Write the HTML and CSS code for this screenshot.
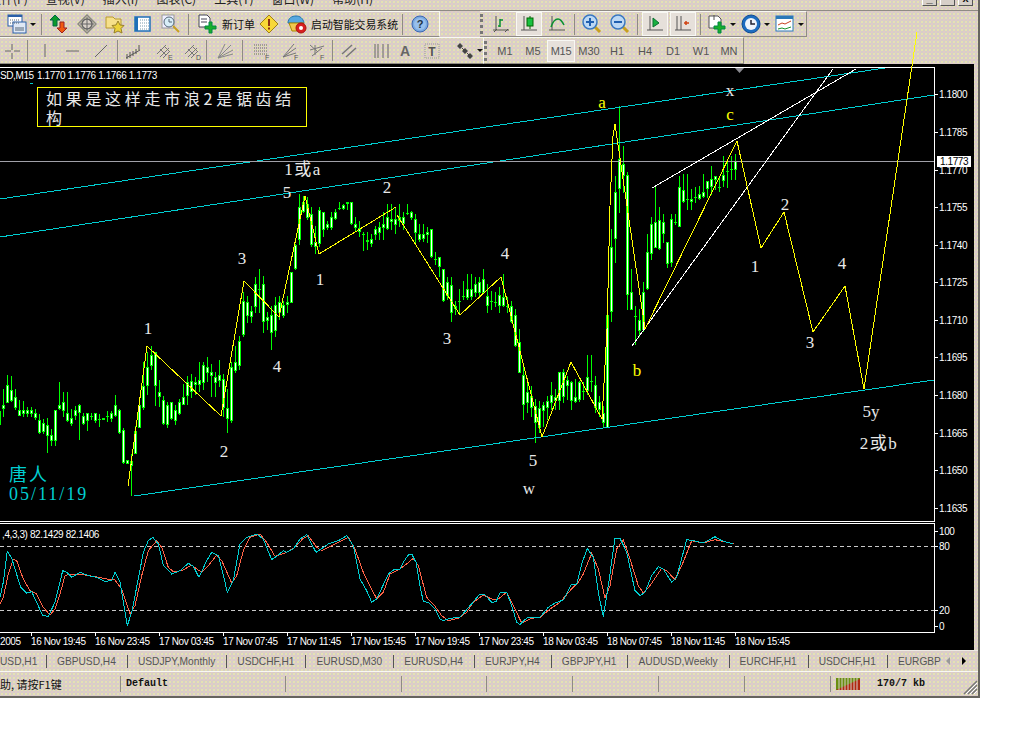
FILE: index.html
```html
<!DOCTYPE html>
<html lang="en">
<head>
  <meta charset="UTF-8">
  <meta name="viewport" content="width=device-width, initial-scale=1.0">
  <title>MetaTrader</title>
  <link rel="stylesheet" href="styles.css">
</head>
<body>
  <div class="window">
    <!-- 菜单栏，上半截被截掉了 -->
    <div class="menu">
      <span class="menu_first">文件(F)</span>
      <span>查视(V)</span>
      <span>插入(I)</span>
      <span>图表(C)</span>
      <span>工具(T)</span>
      <span>窗口(W)</span>
      <span>帮助(H)</span>
      <div class="win_btns">
        <div class="win_btn">_</div>
        <div class="win_btn">▫</div>
        <div class="win_btn">x</div>
      </div>
    </div>

    <div class="tool_row row_top">
      <div class="tool_group group_main">
        <div class="tb tb_caret">
          <svg width="20" height="20" viewBox="0 0 20 20"><rect x="1" y="1" width="14" height="11" fill="#fff" stroke="#2a5fa8"/><rect x="1" y="1" width="14" height="2" fill="#2a5fa8"/><rect x="6" y="8" width="13" height="11" fill="#dfe8f5" stroke="#2a5fa8"/><path d="M3 6h9M3 9h9" stroke="#567" stroke-dasharray="1 1"/><path d="M8 14h9M8 16h9" stroke="#567"/></svg>
          <i class="caret"></i>
        </div>
        <div class="sep"></div>
        <div class="tb"><svg width="20" height="20" viewBox="0 0 20 20"><path d="M6 1l5 5H8v6H4V6H1z" fill="#0a9a2a" stroke="#064"/><path d="M11 8h4v6h3l-5 5-5-5h3z" fill="#f05a10" stroke="#922"/></svg></div>
        <div class="tb"><svg width="20" height="20" viewBox="0 0 20 20"><path d="M10 1l9 9-9 9-9-9z" fill="none" stroke="#8a8a80" stroke-width="1.5"/><circle cx="10" cy="10" r="5" fill="#d8d0c8" stroke="#666" stroke-width="1.5"/><path d="M10 3v14M3 10h14" stroke="#666"/></svg></div>
        <div class="tb"><svg width="20" height="20" viewBox="0 0 20 20"><path d="M1 3h7l2 2h6v9H1z" fill="#f6e08a" stroke="#b89a30"/><path d="M13 7l2 4 4 .5-3 3 1 4.500-4-2-4 2 1-4.500-3-3 4-.5z" fill="#ecd23a" stroke="#97802a"/></svg></div>
        <div class="tb"><svg width="18" height="18" viewBox="0 0 18 18"><rect x="1" y="2" width="15" height="14" fill="#fff" stroke="#1f70b8" stroke-width="1.500"/><rect x="1" y="2" width="3" height="14" fill="#1f70b8"/><path d="M6 5h9M6 8h9M6 11h9M6 14h9" stroke="#79a" stroke-dasharray="1 1"/></svg></div>
        <div class="tb"><svg width="20" height="20" viewBox="0 0 20 20"><rect x="1" y="1" width="12" height="13" fill="#eef" stroke="#999"/><circle cx="8" cy="8" r="5" fill="#d8eef8" stroke="#567"/><path d="M8 5v3h3" stroke="#567" fill="none"/><path d="M12 12l6 6" stroke="#c8a020" stroke-width="2"/></svg></div>
        <div class="sep sep_b"></div>
        <div class="tb_text">
          <svg width="20" height="20" viewBox="0 0 20 20"><path d="M1 1h8l3 3v9H1z" fill="#fff" stroke="#445"/><path d="M3 5h6M3 8h6" stroke="#445"/><path d="M11 8h3v4h4v3h-4v4h-3v-4H7v-3h4z" fill="#18b02a" stroke="#084"/></svg>
          <span>新订单</span>
        </div>
        <div class="tb"><svg width="20" height="20" viewBox="0 0 20 20"><path d="M10 1l9 9-9 9-9-9z" fill="#f8d838" stroke="#a08018"/><path d="M10 5v7M10 13.500v2" stroke="#903010" stroke-width="2"/></svg></div>
        <div class="tb_text tb_robot">
          <svg width="20" height="20" viewBox="0 0 20 20"><path d="M1 9c0-5 4-7 8-7s7 2 8 7z" fill="#58a8e0" stroke="#27a"/><path d="M2 9h15l-2 8H5z" fill="#f0c850" stroke="#a80"/><circle cx="14" cy="14" r="5" fill="#d82020" stroke="#a11"/><circle cx="14" cy="14" r="2" fill="#fff"/></svg>
          <span>启动智能交易系统</span>
        </div>
        <div class="sep"></div>
        <div class="tb"><svg width="18" height="18" viewBox="0 0 18 18"><circle cx="9" cy="9" r="8" fill="#7aa8e0" stroke="#3a68b0"/><circle cx="9" cy="9" r="6" fill="#98c0ec"/><text x="9" y="13" class="icon_help">?</text></svg></div>
      </div>
      <div class="tool_gap"></div>
      <div class="tool_group group_charts">
        <div class="gripper"></div>
        <div class="tb"><svg width="18" height="18" viewBox="0 0 18 18"><path d="M4 1v14M1 15h16M2 17l3-3M13 17l3-3" stroke="#555" fill="none"/><path d="M8 12V4M8 5h3M8 11H6" stroke="#0a9030" stroke-width="1.500" fill="none"/></svg></div>
        <div class="tb tb_on"><svg width="18" height="18" viewBox="0 0 18 18"><path d="M4 1v14M1 15h16" stroke="#555" fill="none"/><path d="M10 1v13" stroke="#060"/><rect x="7" y="3" width="6" height="8" fill="#18c040" stroke="#060"/></svg></div>
        <div class="tb"><svg width="18" height="18" viewBox="0 0 18 18"><path d="M4 1v14M1 15h16" stroke="#555" fill="none"/><path d="M3 12c2-6 5-8 7-8s4 2 6 6" stroke="#0a9030" stroke-width="1.500" fill="none"/></svg></div>
        <div class="sep"></div>
        <div class="tb"><svg width="20" height="20" viewBox="0 0 20 20"><path d="M12 12l6 6" stroke="#c8a020" stroke-width="3"/><circle cx="8" cy="8" r="7" fill="#bcd8f4" stroke="#3a78c0" stroke-width="1.500"/><path d="M4 8h8M8 4v8" stroke="#2060b0" stroke-width="2"/></svg></div>
        <div class="tb"><svg width="20" height="20" viewBox="0 0 20 20"><path d="M12 12l6 6" stroke="#c8a020" stroke-width="3"/><circle cx="8" cy="8" r="7" fill="#bcd8f4" stroke="#3a78c0" stroke-width="1.500"/><path d="M4 8h8" stroke="#2060b0" stroke-width="2"/></svg></div>
        <div class="sep"></div>
        <div class="tb tb_on"><svg width="18" height="18" viewBox="0 0 18 18"><path d="M4 1v14M1 15h16" stroke="#555" fill="none"/><path d="M7 3v9l6-4z" fill="#18b040" stroke="#0a7030"/></svg></div>
        <div class="tb tb_on"><svg width="18" height="18" viewBox="0 0 18 18"><path d="M3 1v14M7 1v14M1 15h16" stroke="#555" fill="none"/><path d="M10 8h5M12 6v4" stroke="#d04010" stroke-width="1.500"/></svg></div>
        <div class="sep"></div>
        <div class="tb tb_caret"><svg width="20" height="20" viewBox="0 0 20 20"><path d="M2 2h9l3 3v9H2z" fill="#fff" stroke="#555"/><path d="M7 1v5" stroke="#555"/><path d="M11 8h3v4h4v3h-4v4h-3v-4H7v-3h4z" fill="#18b02a" stroke="#084"/></svg><i class="caret"></i></div>
        <div class="tb tb_caret"><svg width="20" height="20" viewBox="0 0 20 20"><circle cx="10" cy="10" r="9" fill="#1c6cc0" stroke="#0e4a90"/><circle cx="10" cy="10" r="6" fill="#eef4fb"/><path d="M10 6v4h4" stroke="#223" stroke-width="1.500" fill="none"/></svg><i class="caret"></i></div>
        <div class="tb tb_caret"><svg width="20" height="18" viewBox="0 0 20 18"><rect x="1" y="1" width="17" height="15" fill="#fff" stroke="#2a78b8"/><rect x="1" y="1" width="17" height="3" fill="#2a78b8"/><path d="M3 10l4-2 3 1 6-3" stroke="#c84020" fill="none"/><path d="M3 14l4-1 3 1 6-2" stroke="#18902a" fill="none"/></svg><i class="caret"></i></div>
      </div>
    </div>

    <div class="tool_row row_bottom">
      <div class="tool_group group_draw">
        <div class="tb w24"><svg width="18" height="18" viewBox="0 0 18 18"><path d="M9 2v6M9 11v6M2 9h6M11 9h6" stroke="#666"/></svg></div>
        <div class="sep"></div>
        <div class="tb"><svg width="18" height="18" viewBox="0 0 18 18"><path d="M9 2v13" stroke="#666"/></svg></div>
        <div class="tb"><svg width="18" height="18" viewBox="0 0 18 18"><path d="M2 9h13" stroke="#666"/></svg></div>
        <div class="tb"><svg width="18" height="18" viewBox="0 0 18 18"><path d="M3 15L15 3" stroke="#666"/></svg></div>
        <div class="sep sep_tight"></div>
        <div class="tb"><svg width="18" height="18" viewBox="0 0 18 18"><path d="M2 16l14-8M3 12v5M6 10v6M9 9v5M12 7v5M15 3v5" stroke="#555" fill="none"/></svg></div>
        <div class="tb w36"><svg width="18" height="18" viewBox="0 0 18 18"><path d="M1 12L10 3M4 15l9-9M7 16l7-7M4 7l6 6M8 4l6 6" stroke="#777" fill="none"/><text x="12" y="18" class="icon_tiny">E</text></svg></div>
        <div class="tb w20"><svg width="18" height="18" viewBox="0 0 18 18"><path d="M1 12L10 3M4 15l9-9M7 16l7-7M4 7l6 6M8 4l6 6" stroke="#777" fill="none"/><text x="12" y="18" class="icon_tiny">D</text></svg></div>
        <div class="sep sep_b"></div>
        <div class="tb"><svg width="18" height="18" viewBox="0 0 18 18"><path d="M2 16L15 3M2 16l15-8M2 16l15-4M2 16L9 2" stroke="#888" fill="none"/></svg></div>
        <div class="sep"></div>
        <div class="tb w32"><svg width="20" height="18" viewBox="0 0 20 18"><path d="M2 3h14M2 6h14M2 9h14M2 12h14" stroke="#666" stroke-dasharray="1 1"/><text x="13" y="18" class="icon_tiny">F</text></svg></div>
        <div class="tb w26"><svg width="20" height="18" viewBox="0 0 20 18"><path d="M2 15L13 2M2 15L15 6M2 15l13-4" stroke="#777" fill="none"/><text x="13" y="18" class="icon_tiny">F</text></svg></div>
        <div class="tb w26"><svg width="20" height="18" viewBox="0 0 20 18"><path d="M3 3l8 7M3 8l14-4M5 14L15 6M8 3v10" stroke="#777" fill="none"/><text x="13" y="18" class="icon_tiny">F</text></svg></div>
        <div class="sep sep_tight"></div>
        <div class="tb w30"><svg width="18" height="18" viewBox="0 0 18 18"><path d="M2 12L12 3M6 15L16 6" stroke="#777" stroke-width="1.500" fill="none"/></svg></div>
        <div class="tb w36"><svg width="18" height="18" viewBox="0 0 18 18"><path d="M2 2v14M5 2v14M10 2v14M15 2v14" stroke="#666" fill="none"/></svg></div>
        <div class="tb w10 tb_glyph">A</div>
        <div class="tb w44"><svg width="18" height="18" viewBox="0 0 18 18"><rect x="2" y="2" width="14" height="14" fill="none" stroke="#999" stroke-dasharray="1 1"/><text x="9" y="14" class="icon_t">T</text></svg></div>
        <div class="tb tb_caret tb_arrows"><svg width="18" height="18" viewBox="0 0 18 18"><path d="M4 1l3 3-3 3-3-3zM9 6l3 3-3 3-3-3zM14 11l3 3-3 3-3-3z" fill="#444"/><path d="M6 6l2 2M11 11l2 2" stroke="#444"/></svg><i class="caret"></i></div>
      </div>
      <div class="tool_group group_periods">
        <div class="gripper"></div>
        <div class="period">M1</div>
        <div class="period">M5</div>
        <div class="period period_on">M15</div>
        <div class="period">M30</div>
        <div class="period">H1</div>
        <div class="period">H4</div>
        <div class="period">D1</div>
        <div class="period">W1</div>
        <div class="period">MN</div>
      </div>
    </div>

    <div class="chart">
      <svg class="chart_svg" width="974" height="586" viewBox="0 65 974 586">
        <g id="frame"></g>
        <g id="candles"></g>

        <!-- 通道线 -->
        <g class="ln_cyan">
          <line x1="0" y1="200" x2="885" y2="69"/>
          <line x1="0" y1="238" x2="934" y2="96"/>
          <line x1="134" y1="497" x2="934" y2="381"/>
        </g>
        <line class="ln_price" x1="0" y1="162" x2="934" y2="162"/>
        <g class="ln_white">
          <line x1="652" y1="189" x2="856" y2="70"/>
          <line x1="632" y1="347" x2="833" y2="70"/>
        </g>
        <!-- 波浪 -->
        <polyline class="ln_yellow" points="128,487 147,347 221,417 244,282 279,318 305,197 319,255 396,208"/>
        <polyline class="ln_yellow" points="397,216 460,316 501,278 542,438 571,363 602,420 607,330 610,207 613,137 615,125 627,207 645,330 737,142 761,249 784,213 813,333 845,287 864,390 917,33"/>

        <text x="0" y="80" class="axis">SD,M15</text>
        <text x="37" y="80" class="axis">1.1770 1.1776 1.1766 1.1773</text>
        <rect x="30" y="84" width="3" height="1" fill="#00ced1"/>
        <path d="M735 69h9l-4.500 5z" fill="#8a8a90"/>

        <rect class="note_box" x="37.500" y="88.500" width="269" height="39"/>
        <text x="46" y="106" class="note">如果是这样走市浪2是锯齿结</text>
        <text x="46" y="125" class="note">构</text>

        <g class="label">
          <text x="303" y="176" class="label_wide">1或a</text>
          <text x="287" y="199">5</text>
          <text x="387" y="194">2</text>
          <text x="242" y="265">3</text>
          <text x="320" y="286">1</text>
          <text x="148" y="335">1</text>
          <text x="277" y="373">4</text>
          <text x="224" y="458">2</text>
          <text x="447" y="345">3</text>
          <text x="505" y="260">4</text>
          <text x="533" y="467">5</text>
          <text x="529" y="495">w</text>
          <text x="730" y="97">x</text>
          <text x="755" y="273">1</text>
          <text x="785" y="211">2</text>
          <text x="810" y="349">3</text>
          <text x="842" y="270">4</text>
          <text x="871" y="418">5y</text>
          <text x="879" y="450" class="label_wide">2或b</text>
        </g>
        <g class="label label_yellow">
          <text x="602" y="109">a</text>
          <text x="730" y="121">c</text>
          <text x="637" y="377">b</text>
        </g>
        <text x="9" y="482" class="sign">唐人</text>
        <text x="9" y="501" class="sign">05/11/19</text>

        <text x="2" y="539" class="axis">,4,3,3) 82.1429 82.1406</text>
        <line class="ln_level" x1="0" y1="547.500" x2="934" y2="547.500"/>
        <line class="ln_level" x1="0" y1="611.500" x2="934" y2="611.500"/>
        <polyline id="stoch_signal" class="ln_red"/>
        <polyline id="stoch_main" class="ln_teal"/>
      </svg>
    </div>

    <div class="tabs">
      <div class="tab tab_first">USD,H1</div>
      <div class="tab">GBPUSD,H4</div>
      <div class="tab">USDJPY,Monthly</div>
      <div class="tab">USDCHF,H1</div>
      <div class="tab">EURUSD,M30</div>
      <div class="tab">EURUSD,H4</div>
      <div class="tab">EURJPY,H4</div>
      <div class="tab">GBPJPY,H1</div>
      <div class="tab">AUDUSD,Weekly</div>
      <div class="tab">EURCHF,H1</div>
      <div class="tab">USDCHF,H1</div>
      <div class="tab tab_last">EURGBP</div>
      <i class="arrow arrow_left"></i>
      <i class="arrow arrow_right"></i>
    </div>

    <div class="status">
      <div class="cell cell_help"><span>帮助, 请按F1键</span></div>
      <div class="cell cell_profile">Default</div>
      <div class="cell cell_a"></div>
      <div class="cell cell_b"></div>
      <div class="cell cell_c"></div>
      <div class="cell cell_c"></div>
      <div class="cell cell_c"></div>
      <div class="cell cell_c"></div>
      <div class="cell cell_net">
        <svg width="24" height="12" viewBox="0 0 24 12"><path d="M0 0h24v12H0z" fill="#6a8e10"/><path d="M0 12L24 1v11z" fill="#b02810"/><path d="M3 0v12M6 0v12M9 0v12M12 0v12M15 0v12M18 0v12M21 0v12" stroke="#d6cfc8"/></svg>
        <span>170/7 kb</span>
      </div>
      <svg class="grip" width="16" height="16" viewBox="0 0 16 16"><path d="M15 2L2 15M15 6L6 15M15 10L10 15" stroke="#777" stroke-width="1.500"/><path d="M15 4L4 15M15 8L8 15M15 12L12 15" stroke="#fff"/></svg>
    </div>
  </div>

  <script src="chart.js"></script>
</body>
</html>
```

FILE: styles.css
```css
* {
  margin: 0;
  padding: 0;
  box-sizing: border-box;
}
body {
  background-color: #fff;
  font-family: "Liberation Sans", "Noto Sans CJK SC", sans-serif;
}
.window {
  width: 980px;
  height: 698px;
  border-right: 2px solid #66645f;
  border-bottom: 2px solid #66645f;
  background-color: #d6cfc8;
  background-image:
    radial-gradient(circle, #efeaa8 0.6px, transparent 0.9px),
    radial-gradient(circle, #e8c8c8 0.6px, transparent 0.9px);
  background-size: 4px 4px;
  background-position: 0 0, 2px 2px;
}

/* menu */
.menu {
  display: flex;
  height: 11px;
  overflow: hidden;
  border-bottom: 1px solid #8f8b84;
  font: 12px/14px "Noto Sans CJK SC", sans-serif;
  color: #222;
}
.menu span {
  margin-top: -8px;
  margin-right: 18px;
  white-space: nowrap;
}
.menu_first {
  margin-left: -11px;
}
.win_btns {
  display: flex;
  gap: 3px;
  margin-left: auto;
  margin-right: 5px;
  margin-top: -8px;
}
.win_btn {
  width: 15px;
  height: 14px;
  border: 1px solid #555;
  border-top-color: #fff;
  border-left-color: #fff;
  background-color: #d6cfc8;
  font: bold 11px/10px "Liberation Sans", sans-serif;
  text-align: center;
  color: #111;
}

/* toolbars */
.tool_row {
  display: flex;
}
.row_top {
  height: 26px;
}
.row_bottom {
  height: 27px;
}
.tool_group {
  display: flex;
  align-items: center;
  border-top: 1px solid #f8f8f4;
  border-bottom: 1px solid #8f8b84;
}
.group_main {
  width: 440px;
  padding-left: 4px;
  border-right: 1px solid #f8f8f4;
}
.tool_gap {
  width: 40px;
}
.group_charts {
  width: 327px;
  border-right: 1px solid #8f8b84;
}
.group_draw {
  width: 483px;
}
.group_periods {
  width: 261px;
  border-left: 1px solid #f8f8f4;
  border-right: 1px solid #8f8b84;
}
.tb {
  display: flex;
  align-items: center;
  justify-content: center;
  flex: none;
  width: 28px;
  height: 24px;
}
.w10 {
  width: 10px;
}
.w20 {
  width: 20px;
}
.w24 {
  width: 24px;
}
.w26 {
  width: 26px;
}
.w30 {
  width: 30px;
}
.w32 {
  width: 32px;
}
.w36 {
  width: 36px;
}
.w44 {
  width: 44px;
}
.tb_on {
  border: 1px solid #f8f8f4;
  background-color: #e6e0da;
  margin: 0 1px;
  width: 26px;
}
.tb_caret {
  width: 34px;
  justify-content: flex-start;
  padding-left: 3px;
}
.tb_arrows {
  padding-left: 2px;
}
.tb_glyph {
  font: bold 14px "Liberation Sans", sans-serif;
  color: #666;
}
.caret {
  width: 0;
  height: 0;
  margin-left: 3px;
  border-left: 3px solid transparent;
  border-right: 3px solid transparent;
  border-top: 3px solid #111;
}
.sep {
  flex: none;
  width: 1px;
  height: 21px;
  margin: 0 3px;
  background-color: #8f8b84;
}
.sep_b {
  margin-right: 4px;
}
.sep_tight {
  margin: 0 1px 0 2px;
}
.tb_text {
  display: flex;
  align-items: center;
  flex: none;
  width: 62px;
  height: 24px;
  padding-left: 5px;
  font: 11px "Noto Sans CJK SC", sans-serif;
  color: #111;
  white-space: nowrap;
}
.tb_text span {
  margin-left: 4px;
}
.tb_robot {
  width: 116px;
  padding-left: 4px;
  font-size: 10.9px;
}
.gripper {
  flex: none;
  width: 7px;
  height: 20px;
  border-left: 3px dotted #777;
}
.period {
  flex: none;
  width: 28px;
  height: 22px;
  font: 11px/22px "Liberation Sans", sans-serif;
  text-align: center;
  color: #555;
}
.period_on {
  border: 1px solid #f8f8f4;
  background-color: #e6e0da;
  line-height: 20px;
  letter-spacing: -0.3px;
}
.icon_help {
  font: bold 11px "Liberation Sans", sans-serif;
  fill: #234;
  text-anchor: middle;
}
.icon_tiny {
  font: 7px "Liberation Sans", sans-serif;
  fill: #555;
}
.icon_t {
  font: bold 12px "Liberation Sans", sans-serif;
  fill: #555;
  text-anchor: middle;
}

/* chart */
.chart {
  position: relative;
  width: 974px;
  height: 586px;
  background-color: #000;
}
.chart_svg {
  display: block;
  overflow: visible;
}
.chart_svg line,
.chart_svg polyline {
  fill: none;
  stroke-width: 1;
  shape-rendering: crispEdges;
}
.ln_cyan line {
  stroke: #00ced1;
}
.ln_price {
  stroke: #a0a0a8;
}
.ln_white line {
  stroke: #fff;
}
.chart_svg .ln_yellow {
  stroke: #ffff00;
}
.chart_svg .ln_red {
  stroke: #ff6347;
}
.chart_svg .ln_teal {
  stroke: #00ced1;
}
.ln_level {
  stroke: #c8c8c8;
  stroke-dasharray: 4 3;
}
.axis {
  font: 10px "Liberation Sans", sans-serif;
  letter-spacing: -0.4px;
  fill: #fff;
}
.note_box {
  fill: #000;
  stroke: #ffff00;
}
.note {
  font: 16px "Noto Sans CJK SC", sans-serif;
  letter-spacing: 3.7px;
  fill: #e8e8e8;
}
.label text {
  font: 17px "Liberation Serif", "Noto Sans CJK SC", serif;
  fill: #e8e8e8;
  text-anchor: middle;
}
.label .label_wide {
  letter-spacing: 1.5px;
}
.label_yellow text {
  fill: #ffff00;
}
.sign {
  font: 18px "Liberation Serif", "Noto Sans CJK SC", serif;
  letter-spacing: 2px;
  fill: #00ced1;
}

/* tabs */
.tabs {
  display: flex;
  align-items: center;
  height: 22px;
  border-top: 1px solid #eeeae4;
  border-bottom: 1px solid #f8f8f4;
  font-size: 10.2px;
  color: #555;
  white-space: nowrap;
}
.tab {
  flex: none;
  height: 13px;
  line-height: 13px;
  padding: 0 11px 0 10px;
  border-right: 1px solid #555;
}
.tab_first {
  width: 47px;
  padding: 0 13px 0 0;
  text-align: right;
}
.tab_last {
  width: 54px;
  padding-right: 0;
  border-right: none;
}
.arrow {
  flex: none;
  width: 0;
  height: 0;
  border-top: 4px solid transparent;
  border-bottom: 4px solid transparent;
}
.arrow_left {
  margin-left: 4px;
  border-right: 4px solid #999;
}
.arrow_right {
  margin-left: 12px;
  border-left: 4px solid #000;
}

/* status bar */
.status {
  display: flex;
  align-items: center;
  position: relative;
  height: 23px;
  font: 10px "Liberation Mono", monospace;
  color: #111;
}
.cell {
  flex: none;
  height: 16px;
  line-height: 16px;
  border-right: 1px solid #8f8b84;
}
.cell_help {
  width: 121px;
  overflow: hidden;
  font: 11px/16px "Noto Sans CJK SC", sans-serif;
  white-space: nowrap;
}
.cell_help span {
  margin-left: -11px;
}
.cell_profile {
  width: 165px;
  padding-left: 5px;
  font-weight: bold;
}
.cell_a {
  width: 116px;
}
.cell_b {
  width: 85px;
}
.cell_c {
  width: 86px;
}
.cell_net {
  display: flex;
  align-items: center;
  border-right: none;
  padding-left: 5px;
  font-weight: bold;
}
.cell_net span {
  margin-left: 17px;
}
.grip {
  position: absolute;
  right: 0;
  bottom: 0;
}
```

FILE: chart.js
```js
const SVG_NS = "http://www.w3.org/2000/svg";

// 每根K线 [最高, 实体上, 实体下, 最低]，数值 = (y - base) * 3，从放大截图上量的
const segments = [
  { first: -1, base: 340, bars: [
    [215,215,255,258],[150,198,206,230],[108,138,188,190],[112,153,182,185],[150,175,205,210],[182,213,227,228],
    [185,214,223,230],[205,213,222,232],[205,213,222,230],[210,222,235,240],[225,243,280,282],[240,252,275,282],
    [238,258,287,340],[270,288,303,318],[213,214,303,318],[130,198,206,210],[158,190,212,230],[158,222,242,245],
    [210,237,252,258],[200,212,227,240],[195,198,220,300],[222,230,252,255],[222,222,242,272],[222,230,230,240],
    [222,222,242,250],[225,240,240,260],[238,238,241,241],[215,230,230,245],[215,222,238,245],[168,198,228,230],
    [210,212,280,282],[268,273,370,372],[363,363,372,372],[345,365,378,467],[262,275,341,342],[185,198,265,265],
    [70,140,205,210],[40,85,137,165],[20,48,78,90],[38,40,137,198],[122,160,172,200],[172,183,251,255],
    [190,198,255,265],[190,190,237,240],[198,213,242,255],[180,190,222,225],[135,175,196,196],[110,130,167,195],
    [105,125,155,175],[115,128,136,165],[70,123,136,155],[70,78,128,150],[55,85,98,125],[75,100,107,170],
    [100,115,128,170],[62,108,122,140],[105,120,205,230],[150,208,237,280],[70,85,242,250],[20,70,92,100],[-10,5,78,90]
  ] },
  { first: 60, base: 150, bars: [
    [430,455,555,560],[440,460,497,520],[470,485,502,520],[385,405,472,490],[360,420,420,490],[380,405,517,548],
    [490,505,512,540],[470,497,548,600],[445,468,542,560],[440,460,490,510],[455,468,497,505],[440,460,466,490],
    [370,370,458,460],[285,287,358,360],[135,175,270,285],[140,160,185,190],[145,165,203,210],[175,195,285,290],
    [230,280,290,312],[175,182,283,290],[190,190,240,260],[215,225,233,240],[190,205,233,240],[180,190,208,210],
    [160,176,178,180],[165,167,178,180],[160,160,163,180],[160,160,223,225],[205,226,233,245],[215,236,245,260],
    [250,254,254,302],[250,272,277,300],[255,270,283,290],[230,240,255,270],[220,235,250,270],[190,225,233,270],
    [165,205,238,240],[165,211,217,240],[175,211,224,252],[165,205,213,232],[190,205,223,240],[165,193,193,195],
    [185,190,203,210],[195,210,248,280],[225,256,270,275],[225,256,268,275],[235,250,254,280],[240,240,322,325],
    [310,330,330,345],[325,325,352,380],[360,360,452,455],[385,400,437,450],[385,407,488,515],[455,470,478,495],
    [420,455,455,490],[395,440,440,450],[375,420,445,450],[375,420,440,450],[385,405,428,440],[385,400,428,440],
    [360,390,428,430],[405,440,467,490],[425,455,455,480],[430,458,458,470],[415,438,467,490],[375,445,467,470],
    [445,470,470,490],[455,470,515,520]
  ] },
  { first: 128, base: 80, bars: [
    [690,708,797,800],[750,790,878,880],[860,888,975,1020],[910,940,970,1000],[920,950,985,1010],[960,980,1030,1090],
    [965,988,1045,1060],[970,978,992,1040],[950,965,985,1020],[908,948,970,990],[930,955,962,990],[880,880,962,990],
    [870,880,950,970],[890,903,917,960],[905,910,962,990],[900,955,965,970],[905,908,960,965],[910,935,935,960],
    [828,895,932,945],[828,905,905,935],[890,918,985,1000],[950,970,990,1010],[980,1002,1030,1045],[700,708,1043,1045],
    [450,505,697,725],[290,340,478,550],[82,240,328,400],[200,256,287,340],[280,287,645,690],[570,640,690,690],
    [680,710,710,795],[690,723,752,770],[610,640,750,755],[465,520,627,630],[415,435,523,540],[325,430,503,505],
    [385,422,508,510],[405,430,463,490],[490,490,553,565],[405,420,548,560],[405,430,430,435],[290,325,442,442],
    [285,332,367,370],[285,360,360,390],[330,360,367,390],[325,355,355,370],[320,345,358,360],[285,340,352,355],
    [305,307,328,355],[260,300,322,345],[290,292,300,330],[290,325,325,335],[230,287,304,320],[250,275,275,325],
    [232,271,271,300],[225,247,270,300]
  ] }
];

const stochMain = [
  [0,235],[10,190],[22,97],[35,118],[48,160],[62,205],[80,222],[95,218],[110,250],[128,290],[145,292],[165,250],[188,155],[200,160],[215,175],
  [240,160],[265,170],[290,175],[315,187],[335,185],[345,160],[360,190],[382,320],[395,280],[415,180],[430,100],[445,65],[458,55],[475,75],
  [490,138],[515,165],[540,155],[565,133],[580,142],[597,175],[620,125],[635,100],[655,110],[668,160],[682,220],[700,185],[720,75],[740,55],
  [770,45],[790,60],[815,122],[835,108],[850,95],[860,100],[880,90],[900,60],[920,47],[948,100],[985,75],[1015,65],[1040,50],[1060,80],
  [1080,180],[1100,215],[1115,250],[1130,240],[1165,165],[1185,150],[1200,150],[1210,130],[1225,108],[1235,105],[1248,130],[1260,200],
  [1270,248],[1285,250],[1305,270],[1320,300],[1330,305],[1350,298],[1380,295],[1410,260],[1440,225],[1455,228],[1475,250],[1488,248],
  [1500,222],[1520,220],[1535,260],[1550,310],[1560,317],[1575,302],[1585,295],[1620,295],[1645,265],[1665,252],[1690,243],[1715,195],
  [1730,195],[1745,135],[1762,88],[1780,115],[1795,220],[1810,293],[1825,200],[1845,58],[1860,58],[1880,100],[1905,215],[1920,230],
  [1935,220],[1955,170],[1975,143],[1990,150],[2015,190],[2030,175],[2060,62],[2080,65],[2110,72],[2145,53],[2165,65],[2200,75]
];
const stochSignal = [
  [0,255],[10,235],[25,165],[40,120],[50,125],[70,180],[90,215],[110,225],[130,265],[150,288],[165,270],[180,225],[195,170],[210,165],[240,166],
  [280,172],[320,180],[345,183],[365,210],[390,285],[405,260],[425,170],[445,95],[470,65],[485,85],[505,145],[520,158],[545,155],[575,138],
  [590,150],[605,160],[625,140],[650,108],[665,125],[695,192],[710,170],[730,95],[750,55],[780,45],[800,70],[825,112],[860,100],[885,85],
  [910,58],[925,50],[950,85],[965,95],[1000,78],[1045,55],[1065,90],[1090,160],[1130,240],[1150,220],[1170,165],[1195,152],[1200,150],
  [1220,135],[1240,118],[1255,140],[1280,235],[1305,262],[1325,290],[1345,305],[1375,298],[1400,280],[1420,250],[1450,228],[1475,240],
  [1495,240],[1520,220],[1545,270],[1565,312],[1595,298],[1620,295],[1650,270],[1680,250],[1710,215],[1735,190],[1750,165],[1775,103],
  [1795,150],[1815,237],[1830,200],[1850,90],[1870,62],[1890,120],[1915,200],[1930,222],[1950,200],[1985,148],[2000,155],[2025,182],
  [2045,140],[2075,65],[2110,72],[2145,62],[2175,68],[2203,75]
];

const priceLabels = ["1.1800","1.1785","1.1770","1.1755","1.1740","1.1725","1.1710","1.1695","1.1680","1.1665","1.1650","1.1635"];
const priceY = [95,133,171,208,246,283,321,358,396,434,471,509];
const timeLabels = ["16 Nov 19:45","16 Nov 23:45","17 Nov 03:45","17 Nov 07:45","17 Nov 11:45","17 Nov 15:45","17 Nov 19:45","17 Nov 23:45","18 Nov 03:45","18 Nov 07:45","18 Nov 11:45","18 Nov 15:45"];

function add(parent, tag, attrs, text) {
  const el = document.createElementNS(SVG_NS, tag);
  for (const key in attrs) el.setAttribute(key, attrs[key]);
  if (text) el.textContent = text;
  parent.appendChild(el);
  return el;
}

function rect(parent, x, y, w, h, fill) {
  return add(parent, "rect", { x, y, width: w, height: h, fill });
}

// K线
const candles = document.getElementById("candles");
segments.forEach(function (seg) {
  seg.bars.forEach(function (bar, i) {
    const x = 3 + 4 * (seg.first + i);
    const [high, top, bottom, low] = bar.map(function (v) {
      return Math.round(seg.base + v / 3);
    });
    rect(candles, x, high, 1, low - high + 1, "#00ff00");
    rect(candles, x - 1, top, 3, bottom - top + 1, "#00ff00");
    if (bottom - top >= 2) rect(candles, x, top + 1, 1, bottom - top - 1, "#fff");
  });
});

// 边框和坐标轴
const frame = document.getElementById("frame");
rect(frame, 0, 68, 934, 1, "#fff");
rect(frame, 934, 68, 1, 455, "#fff");
rect(frame, 0, 522, 935, 1, "#fff");
rect(frame, 0, 524, 935, 1, "#fff");
rect(frame, 934, 524, 1, 110, "#fff");
rect(frame, 0, 633, 935, 1, "#fff");

priceLabels.forEach(function (label, i) {
  rect(frame, 935, priceY[i], 3, 1, "#fff");
  add(frame, "text", { x: 939, y: priceY[i] + 4, class: "axis" }, label);
});
[["100", 532], ["80", 547], ["20", 611], ["0", 627]].forEach(function (item) {
  rect(frame, 935, item[1], 3, 1, "#fff");
  add(frame, "text", { x: 939, y: item[1] + 4, class: "axis" }, item[0]);
});

add(frame, "text", { x: 0, y: 646, class: "axis" }, "2005");
timeLabels.forEach(function (label, i) {
  const x = 31 + 64 * i;
  rect(frame, x, 634, 1, 3, "#fff");
  add(frame, "text", { x: x, y: 646, class: "axis" }, label);
});

// 当前价
rect(frame, 937, 157, 34, 11, "#fff");
add(frame, "text", { x: 940, y: 166, class: "axis", style: "fill:#000" }, "1.1773");

// 随机指标
function toPoints(list) {
  return list.map(function (p) {
    return (p[0] / 3).toFixed(1) + "," + (520 + p[1] / 3).toFixed(1);
  }).join(" ");
}
document.getElementById("stoch_main").setAttribute("points", toPoints(stochMain));
document.getElementById("stoch_signal").setAttribute("points", toPoints(stochSignal));
```
